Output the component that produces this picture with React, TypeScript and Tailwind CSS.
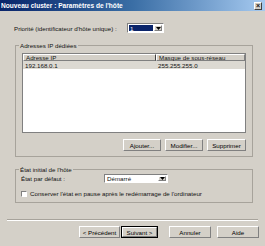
import React from "react"

const face = "bg-[#d4d0c8]"

function Btn({ label, primary }: { label: string; primary?: boolean }) {
  return (
    <div
      className={`${face} h-[12px] flex items-center justify-center ${
        primary ? "border border-black" : ""
      }`}
    >
      <div className="w-full h-full flex items-center justify-center border-t border-l border-t-white border-l-white border-b border-r border-b-[#808080] border-r-[#808080] text-black">
        {label}
      </div>
    </div>
  )
}

function Arrow() {
  return (
    <div className={`${face} w-[8px] h-full flex items-center justify-center border-t border-l border-t-white border-l-white border-b border-r border-b-[#808080] border-r-[#808080]`}>
      <svg width="5" height="3" viewBox="0 0 5 3">
        <path d="M0 0h5L2.5 3z" fill="#000" />
      </svg>
    </div>
  )
}

export default function App() {
  return (
    <div
      className={`w-[265px] h-[246px] ${face} flex flex-col text-[6.2px] leading-[7px] text-[#111] overflow-hidden`}
      style={{ fontFamily: '"Liberation Sans", Arial, sans-serif' }}
    >
      {/* title bar */}
      <div className="h-[11px] flex items-center justify-between bg-gradient-to-r from-[#0a246a] via-[#3a6ea5] to-[#a6caf0]">
        <span className="pl-[1px] font-bold text-white text-[6.6px]">Nouveau cluster : Paramètres de l'hôte</span>
        <div className={`${face} w-[8px] h-[8px] mr-[3px] flex items-center justify-center border-t border-l border-t-white border-l-white border-b border-r border-b-[#404040] border-r-[#404040] text-[7px] leading-[7px] font-bold`}>
          ×
        </div>
      </div>

      {/* priority */}
      <div className="mt-[12px] h-[10px] flex items-center">
        <span className="pl-[14px] w-[127px]">Priorité (identificateur d'hôte unique) :</span>
        <div className="w-[37px] h-[10px] bg-white flex items-stretch p-[1px] border-t border-l border-t-[#808080] border-l-[#808080] border-b border-r border-b-white border-r-white">
          <div className="flex-1 flex items-center pl-[1px] bg-[#0a246a] text-white mr-[1px]">1</div>
          <Arrow />
        </div>
      </div>

      {/* group 1 */}
      <div className="relative mt-[12px] ml-[15px] mr-[12px] border border-[#a7a39b] pt-[7px] px-[6px] pb-[5px]">
        <span className={`absolute -top-[4px] left-[3px] px-[1px] ${face}`}>Adresses IP dédiées</span>
        <div className="h-[80px] bg-white border border-[#808080] flex flex-col">
          <div className="h-[7px] flex">
            <div className={`${face} w-[133px] pl-[2px] flex items-center border-t border-l border-t-white border-l-white border-b border-r border-b-[#808080] border-r-[#404040]`}>
              Adresse IP
            </div>
            <div className={`${face} flex-1 pl-[2px] flex items-center border-t border-l border-t-white border-l-white border-b border-r border-b-[#808080] border-r-[#808080]`}>
              Masque de sous-réseau
            </div>
          </div>
          <div className="h-[8px] flex items-center bg-[#dcd9d2]">
            <span className="w-[133px] pl-[2px]">192.168.0.1</span>
            <span className="pl-[2px]">255.255.255.0</span>
          </div>
        </div>
        <div className="mt-[6px] flex justify-end gap-[4px]">
          <div className="w-[38px]"><Btn label="Ajouter..." /></div>
          <div className="w-[38px]"><Btn label="Modifier..." /></div>
          <div className="w-[39px]"><Btn label="Supprimer" /></div>
        </div>
      </div>

      {/* group 2 */}
      <div className="relative mt-[12px] ml-[15px] mr-[12px] border border-[#a7a39b] pt-[4px] pl-[5px] pr-[6px] pb-[5px]">
        <span className={`absolute -top-[4px] left-[3px] px-[1px] ${face}`}>État initial de l'hôte</span>
        <div className="h-[9px] flex items-center">
          <span className="w-[83px]">État par défaut :</span>
          <div className="w-[64px] h-[9px] bg-white flex items-stretch p-[1px] border-t border-l border-t-[#808080] border-l-[#808080] border-b border-r border-b-white border-r-white">
            <div className="flex-1 flex items-center pl-[1px]">Démarré</div>
            <Arrow />
          </div>
        </div>
        <div className="mt-[7px] h-[7px] flex items-center">
          <div className="w-[6px] h-[6px] bg-white border-t border-l border-t-[#808080] border-l-[#808080] border-b border-r border-b-white border-r-white" />
          <span className="ml-[3px]">Conserver l'état en pause après le redémarrage de l'ordinateur</span>
        </div>
      </div>

      {/* separator */}
      <div className="mt-[16px] mx-[7px] h-[2px] border-t border-t-[#a7a39b] border-b border-b-white" />

      {/* footer buttons */}
      <div className="mt-[5px] flex pl-[79px]">
        <div className="w-[41px]"><Btn label="< Précédent" /></div>
        <div className="w-[37px] ml-[1px]"><Btn label="Suivant >" primary /></div>
        <div className="w-[42px] ml-[11px]"><Btn label="Annuler" /></div>
        <div className="w-[42px] ml-[6px]"><Btn label="Aide" /></div>
      </div>
    </div>
  )
}
